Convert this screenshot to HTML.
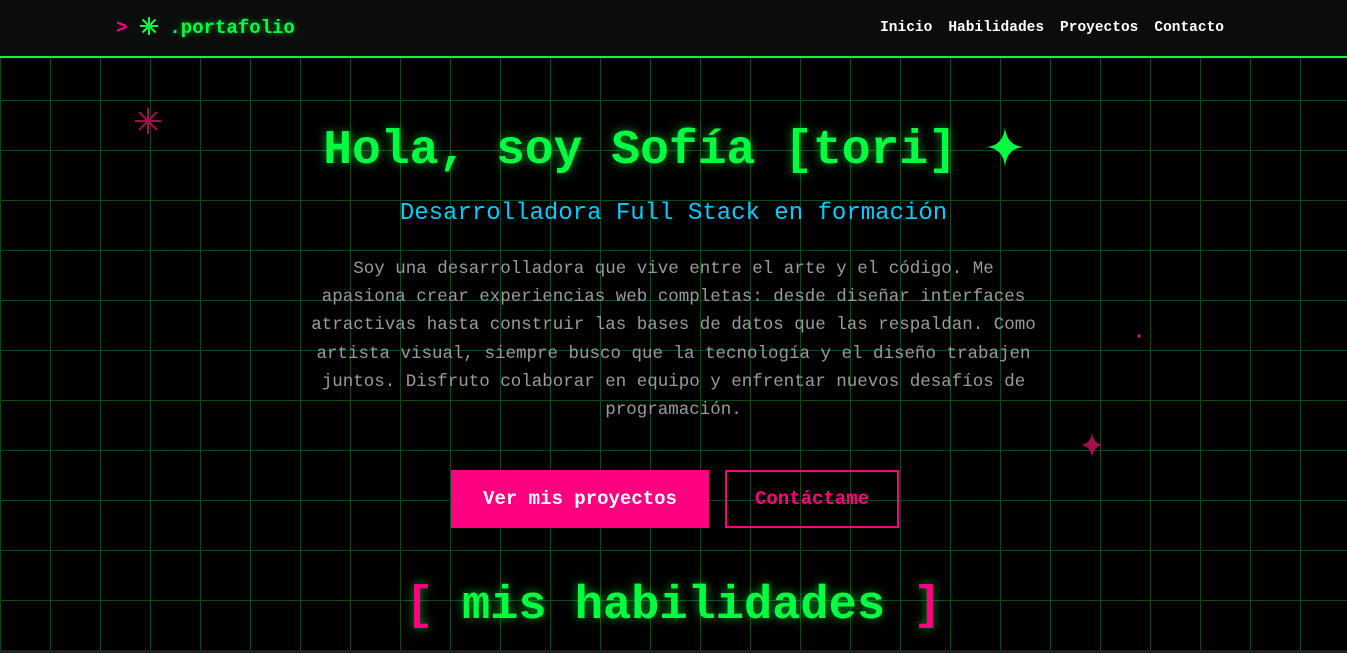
<!DOCTYPE html>
<html><head><meta charset="utf-8"><style>
*{margin:0;padding:0;box-sizing:border-box}
html,body{width:1347px;height:653px;overflow:hidden}
body{background:#000;font-family:"Liberation Mono",monospace;position:relative;
background-image:linear-gradient(#0b4a1c 1px,transparent 1px),linear-gradient(90deg,#0b4a1c 1px,transparent 1px);
background-size:50px 50px;background-position:0 0,0 0}
nav{position:absolute;top:0;left:0;width:1347px;height:58px;background:#0b0c0c;border-bottom:2px solid #00ff41}
.logo{position:absolute;left:116px;top:16px;font-size:19px;font-weight:bold;color:#00ff41;text-shadow:0 0 6px rgba(0,255,65,.6);white-space:nowrap}
.logo .g{color:#ff0080;text-shadow:none}
.logo svg{vertical-align:-3px;margin:0 10px 0 12px}
.links{position:absolute;right:123px;top:20px;font-size:14.5px;font-weight:bold;color:#fff;display:flex;gap:16px}
.c{position:absolute;left:0;width:1347px;text-align:center;white-space:pre}
h1{top:124px;font-size:48px;font-weight:bold;color:#00ff41;text-shadow:0 0 10px rgba(0,255,65,.6)}
h1 svg{vertical-align:-4px}
h2{top:200px;font-size:24px;font-weight:normal;color:#00ccff}
p.c{top:255px;font-size:17.5px;line-height:28.2px;color:#9a9a9a}
.btn{position:absolute;top:470px;height:58px;font-size:19px;font-weight:bold;display:flex;align-items:center;justify-content:center}
.b1{left:451px;width:258px;background:#ff0080;color:#fff}
.b2{left:725px;width:174px;border:2px solid #ff0080;color:#ff0080}
h3{top:580px;font-size:47px;font-weight:bold;color:#00ff41;text-shadow:0 0 10px rgba(0,255,65,.6)}
h3 b{color:#ff0080}
.bar{position:absolute;top:650px;left:0;width:1347px;height:3px;background:#222}
</style></head><body>
<nav><div class="logo"><span class="g">&gt;</span><svg width="20" height="20" viewBox="0 0 20 20"><g stroke="#00ff41" stroke-width="2"><line x1="10" y1="1" x2="10" y2="19"/><line x1="1" y1="10" x2="19" y2="10"/><line x1="3.5" y1="3.5" x2="16.5" y2="16.5"/><line x1="16.5" y1="3.5" x2="3.5" y2="16.5"/></g></svg>.portafolio</div>
<div class="links"><span>Inicio</span><span>Habilidades</span><span>Proyectos</span><span>Contacto</span></div></nav>
<svg style="position:absolute;left:134px;top:107px" width="28" height="28" viewBox="0 0 28 28"><g stroke="#a0104f" stroke-width="2"><line x1="14" y1="1" x2="14" y2="27"/><line x1="1" y1="14" x2="27" y2="14"/><line x1="5" y1="5" x2="23" y2="23"/><line x1="23" y1="5" x2="5" y2="23"/></g></svg>
<div style="position:absolute;left:1137px;top:334px;width:4px;height:4px;background:#a0104f;border-radius:50%"></div>
<svg style="position:absolute;left:1080px;top:432px" width="24" height="26" viewBox="0 0 24 26"><path d="M12 0Q13 12 24 13Q13 14 12 26Q11 14 0 13Q11 12 12 0Z" fill="#a0104f"/></svg>
<h1 class="c">Hola, soy Sofía [tori] <svg width="38" height="40" viewBox="0 0 24 26"><path d="M12 0Q13 12 24 13Q13 14 12 26Q11 14 0 13Q11 12 12 0Z" fill="#00ff41"/></svg></h1>
<h2 class="c">Desarrolladora Full Stack en formación</h2>
<p class="c">Soy una desarrolladora que vive entre el arte y el código. Me
apasiona crear experiencias web completas: desde diseñar interfaces
atractivas hasta construir las bases de datos que las respaldan. Como
artista visual, siempre busco que la tecnología y el diseño trabajen
juntos. Disfruto colaborar en equipo y enfrentar nuevos desafíos de
programación.</p>
<div class="btn b1">Ver mis proyectos</div>
<div class="btn b2">Contáctame</div>
<h3 class="c"><b>[</b> mis habilidades <b>]</b></h3>
<div class="bar"></div>
</body></html>
